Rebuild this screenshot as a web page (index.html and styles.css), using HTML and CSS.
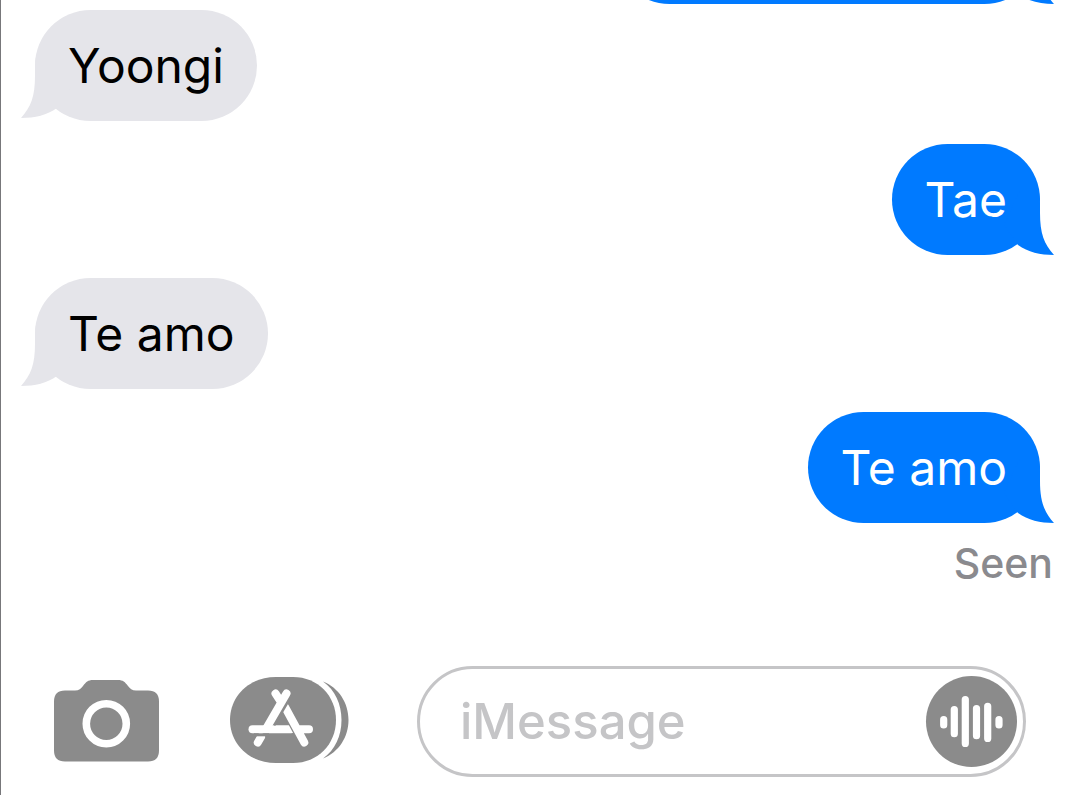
FILE: index.html
```html
<!DOCTYPE html>
<html lang="en">
<head>
<meta charset="utf-8">
<meta name="viewport" content="width=device-width, initial-scale=1">
<title>Messages</title>
<link rel="stylesheet" href="styles.css">
</head>
<body>
<svg class="defs" aria-hidden="true">
  <symbol id="tail" viewBox="0 0 54 70">
    <path d="M38 5Q40 11 40 18V28C40 48 44 59 54 70C40 70 28 67 18 60L4 40L20 5Z"/>
  </symbol>
</svg>
<div class="chat">
  <main class="thread">
    <div class="bubble sent long"><svg class="tail" aria-hidden="true"><use href="#tail"/></svg></div>
    <div class="bubble received reply">Yoongi<svg class="tail" aria-hidden="true"><use href="#tail"/></svg></div>
    <div class="bubble sent">Tae<svg class="tail" aria-hidden="true"><use href="#tail"/></svg></div>
    <div class="bubble received">Te amo<svg class="tail" aria-hidden="true"><use href="#tail"/></svg></div>
    <div class="bubble sent">Te amo<svg class="tail" aria-hidden="true"><use href="#tail"/></svg></div>
    <div class="status">Seen</div>
  </main>
  <form class="composer">
    <button class="icon-button" type="button" aria-label="Camera">
      <svg width="105" height="84" viewBox="0 0 105 84">
        <path fill="#8b8b8b" d="M11 10.500H21C25 10.500 27 8.500 29 6C32 2 34 0 39 0H64C69 0 71 2 74 6C76 8.500 78 10.500 82 10.500H94Q105 10.500 105 21.500V70.500Q105 81.500 94 81.500H11Q0 81.500 0 70.500V21.500Q0 10.500 11 10.500Z"/>
        <circle cx="52.300" cy="43.700" r="20" fill="none" stroke="#fff" stroke-width="7.600"/>
      </svg>
    </button>
    <button class="icon-button" type="button" aria-label="Apps">
      <svg width="118" height="90" viewBox="0 0 118 90" stroke-width="8" stroke-linecap="round" fill="none">
        <path fill="#8b8b8b" d="M47 0H64C89 0 107 19 107 43S89 86 64 86H47C20 86 1 67 1 43S20 0 47 0Z"/>
        <path fill="#8b8b8b" d="M94 4.500C110 11 119.500 26 119.500 43S110 75 94 81.500C106 73 112.500 59 112.500 43S106 13 94 4.500Z"/>
        <path stroke="#fff" d="M23.500 52.300H62"/>
        <path stroke="#8b8b8b" stroke-width="11" d="M57 31L75 65"/>
        <path stroke="#fff" d="M56 30L75.300 65.500M70 52.300H80"/>
        <path stroke="#8b8b8b" stroke-width="12" stroke-linecap="butt" d="M55 22L41 46"/>
        <path stroke="#fff" d="M57.500 16.500L37.500 51M46.500 16.500L52 25M32 60L28.800 65.500"/>
        <path stroke="#8b8b8b" stroke-width="3" stroke-linecap="butt" d="M25 57.800H40"/>
      </svg>
    </button>
    <div class="field">
      <input class="field-input" type="text" placeholder="iMessage" aria-label="iMessage">
      <button class="icon-button" type="button" aria-label="Record audio">
        <svg width="91" height="91" viewBox="0 0 91 91">
          <circle cx="45.500" cy="45.500" r="45.500" fill="#8b8b8b"/>
          <path stroke="#fff" stroke-width="7.200" stroke-linecap="round" d="M17.700 43.700V49M28.300 33.600V57.700M39.300 23.600V67.400M50.500 32.600V59.700M61.700 30.300V62.400M73 43.700V49"/>
        </svg>
      </button>
    </div>
  </form>
</div>
</body>
</html>
```
FILE: styles.css
```css
* { box-sizing: border-box; }

body {
  margin: 0;
  background: #fff;
  font-family: Inter, "Liberation Sans", sans-serif;
}

.defs {
  position: absolute;
  width: 0;
  height: 0;
}

.chat {
  display: flex;
  flex-direction: column;
  height: 100vh;
  border-left: 1px solid #77777a;
}

.thread {
  flex: 1;
  min-height: 0;
  display: flex;
  flex-direction: column;
  justify-content: flex-end;
  overflow: hidden;
  padding: 0 27px 78px 34px;
}

.bubble {
  position: relative;
  flex: none;
  min-height: 111px;
  margin-top: 23px;
  padding: 24px 33px 23px;
  border-radius: 56px;
  font-size: 48px;
  line-height: 64px;
}

.received {
  align-self: flex-start;
  background: #e5e5ea;
  color: #000;
}

.sent {
  align-self: flex-end;
  margin-right: 13px;
  background: #007aff;
  color: #fff;
}

.long { width: 426px; }

.reply { margin-top: 6px; }

.tail {
  position: absolute;
  width: 54px;
  height: 70px;
}

.sent .tail {
  right: -14px;
  bottom: 0;
  fill: #007aff;
}

.received .tail {
  left: -14px;
  bottom: 3px;
  fill: #e5e5ea;
  transform: scaleX(-1);
}

.status {
  flex: none;
  align-self: flex-end;
  margin-top: 15px;
  color: #8a8a8e;
  font-size: 41px;
  font-weight: 500;
  line-height: 50px;
}

.composer {
  display: flex;
  align-items: center;
  gap: 70px;
  padding: 0 54px 18px 53px;
}

.icon-button {
  flex: none;
  display: block;
  padding: 0;
  border: 0;
  background: none;
}

.icon-button svg {
  display: block;
  overflow: visible;
}

.field {
  flex: 1;
  min-width: 0;
  display: flex;
  align-items: center;
  height: 111px;
  padding: 0 6px 0 40px;
  border: 3px solid #c5c5c7;
  border-radius: 56px;
}

.field-input {
  flex: 1;
  min-width: 0;
  padding: 0;
  border: 0;
  outline: 0;
  background: none;
  color: #000;
  font-family: inherit;
  font-size: 49px;
  font-weight: 500;
  line-height: 64px;
}

.field-input::placeholder {
  color: #c5c5c7;
  opacity: 1;
}
```
